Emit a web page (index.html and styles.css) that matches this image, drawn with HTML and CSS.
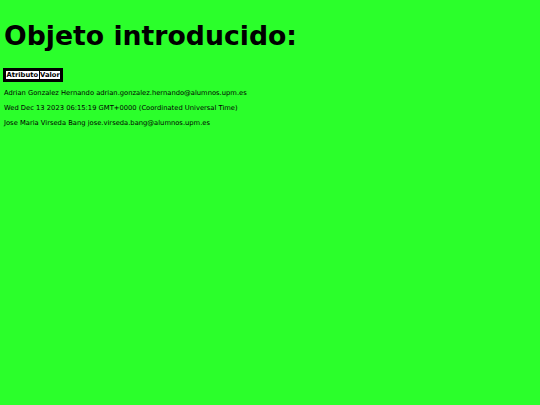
FILE: index.html
```html
<!DOCTYPE html>
<html>
<head>
<meta charset="utf-8">
<link rel="stylesheet" href="styles.css">
</head>
<body>
<h1 class="title">Objeto introducido:</h1>
<table class="tbl">
<tr><th>Atributo</th><th>Valor</th></tr>
</table>
<div class="rows">
<p class="row">Adrian Gonzalez Hernando adrian.gonzalez.hernando@alumnos.upm.es</p>
<p class="row">Wed Dec 13 2023 06:15:19 GMT+0000 (Coordinated Universal Time)</p>
<p class="row">Jose Maria Virseda Bang jose.virseda.bang@alumnos.upm.es</p>
</div>
</body>
</html>
```
FILE: styles.css
```css
html { background: #2bff2b; }
body {
  margin: 0;
  padding: 4px 4px;
  font-family: "DejaVu Sans", Verdana, sans-serif;
  color: #000;
}
.title {
  font-size: 26.7px;
  font-weight: bold;
  margin: 16px 0 16px 0;
  line-height: 32px;
}
.tbl {
  border: 2px solid #000;
  border-collapse: separate;
  border-spacing: 1px;
  background: #000;
  margin-left: -1px;
}
.tbl th {
  background: #fff;
  font-size: 6.75px;
  font-weight: bold;
  padding: 0 0.5px;
  line-height: 8px;
}
.rows {
  margin-top: 4px;
}
.row {
  font-size: 6.75px;
  margin: 0;
  line-height: 15px;
}
```
